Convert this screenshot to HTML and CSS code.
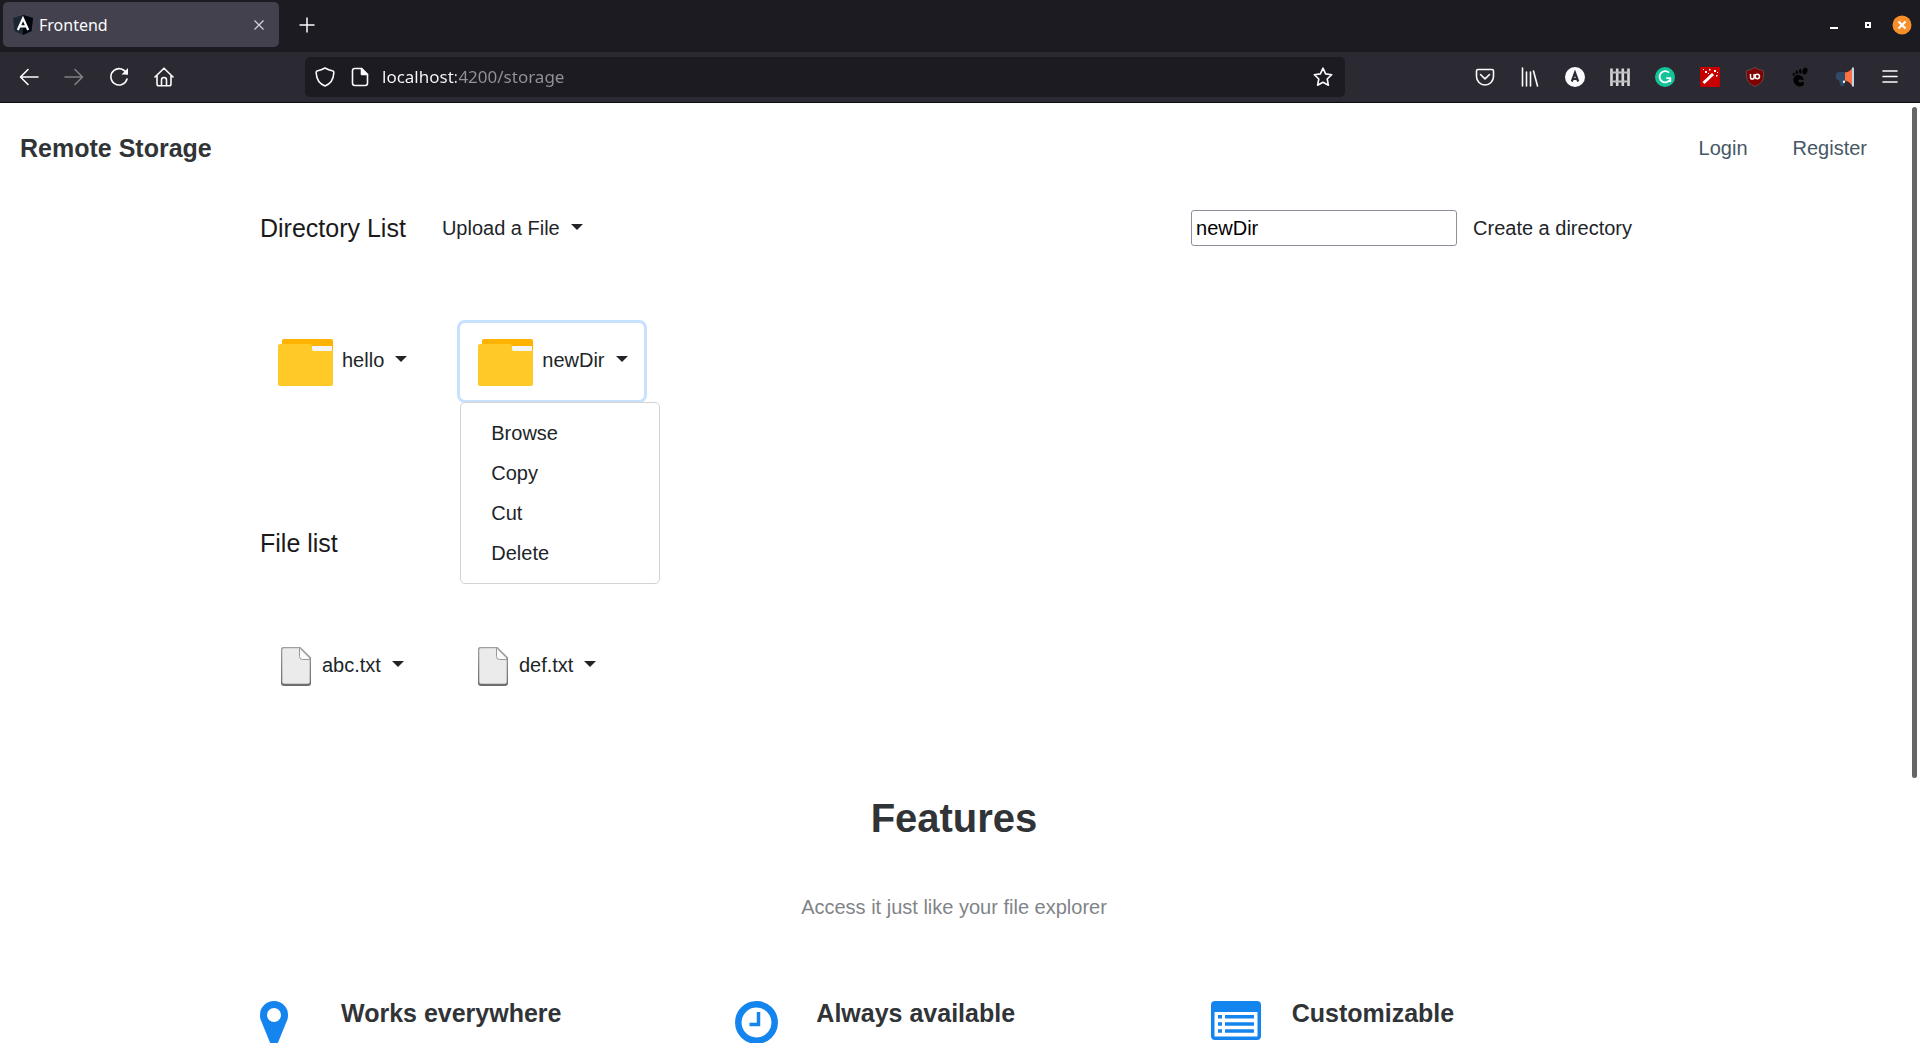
FILE: index.html
```html
<!DOCTYPE html>
<html lang="en">
<head>
<meta charset="utf-8">
<title>Frontend</title>
<link rel="stylesheet" href="styles.css">
</head>
<body>
<div class="browser">
  <header class="chrome">
    <div class="tabstrip">
      <div class="tab">
        <svg class="favicon" width="20" height="20" viewBox="0 0 20 20"><path d="M10 0 20 3 18.500 16 10 20 1.500 16 0 3Z" fill="#1d2733"/><path d="M10 0 20 3 18.500 16 10 20Z" fill="#02060f"/><path fill="none" stroke="#fff" stroke-width="2.200" d="M4.800 15 10 3.500 15.200 15M7 11.300h6"/></svg>
        <span class="tab-title">Frontend</span>
        <button class="tab-close" aria-label="Close tab"><svg width="10" height="10" viewBox="0 0 10 10"><path d="M.5.5l9 9M9.500.5l-9 9" stroke="#d5d5da" stroke-width="1.200"/></svg></button>
      </div>
      <button class="tool" aria-label="New tab"><svg width="16" height="16" viewBox="0 0 16 16"><path d="M8 .5v15M.5 8h15" stroke="#fbfbfe" stroke-width="1.500"/></svg></button>
      <div class="window-controls">
        <button class="win" aria-label="Minimize"><svg width="16" height="18" viewBox="0 0 16 18"><path d="M4 12h8" stroke="#fff" stroke-width="2"/></svg></button>
        <button class="win" aria-label="Maximize"><svg width="16" height="18" viewBox="0 0 16 18"><rect x="6" y="7" width="4" height="4" fill="none" stroke="#fff" stroke-width="2"/></svg></button>
        <button class="win" aria-label="Close"><svg width="20" height="20" viewBox="0 0 20 20"><circle cx="10" cy="10" r="9.500" fill="#f7902b"/><path d="M6.500 6.500l7 7M13.500 6.500l-7 7" stroke="#fff" stroke-width="2.200"/></svg></button>
      </div>
    </div>
    <div class="toolbar">
      <nav class="tools" aria-label="Navigation">
        <button class="tool" aria-label="Back"><svg width="20" height="20" viewBox="0 0 20 20" class="line"><path d="M19 10H2M9 2.500 1.500 10 9 17.500"/></svg></button>
        <button class="tool dim" aria-label="Forward"><svg width="20" height="20" viewBox="0 0 20 20" class="line"><path d="M1 10h17M11 2.500 18.500 10 11 17.500"/></svg></button>
        <button class="tool" aria-label="Reload"><svg width="20" height="20" viewBox="0 0 20 20" class="line"><path d="M17.800 7A8.200 8.200 0 1 0 18 12"/><path d="M19 1v6.500h-6.500z" fill="#fbfbfe" stroke="none"/></svg></button>
        <button class="tool" aria-label="Home"><svg width="20" height="20" viewBox="0 0 20 20" class="line"><path d="M1 10 10 1.200 19 10M3 8.500V17q0 1.800 1.800 1.800h10.400Q17 18.800 17 17V8.500M7.500 18.500V13a2.500 2.500 0 0 1 5 0v5.500"/></svg></button>
      </nav>
      <div class="urlbar">
        <button class="url-tool" aria-label="Protection"><svg width="20" height="20" viewBox="0 0 20 20" class="line"><path d="M10 1C7.500 2.500 4.500 3.500 2 4c-1 .3-.8 1-.8 2C1.500 12.500 5 17 10 19c5-2 8.500-6.500 8.800-13 0-1 .2-1.700-.8-2-2.500-.5-5.500-1.500-8-3z"/></svg></button>
        <button class="url-tool" aria-label="Site information"><svg width="20" height="20" viewBox="0 0 20 20" class="line"><path d="M11.500 1.500H4.700Q2.500 1.500 2.500 3.700v12.600q0 2.200 2.200 2.200h10.600q2.200 0 2.200-2.200V7.500z"/><path d="M11.500 1.500v6h6z" fill="#fbfbfe"/></svg></button>
        <input class="url-input" type="text" aria-label="Address" value="localhost:4200/storage">
        <button class="tool" aria-label="Bookmark"><svg width="20" height="20" viewBox="0 0 20 20" class="line"><path d="M10 1.200l2.600 5.700 6.100.8-4.500 4.300 1.200 6.200L10 15.200l-5.400 3 1.200-6.200L1.300 7.700l6.100-.8z"/></svg></button>
      </div>
      <div class="tools">
        <button class="tool" aria-label="Pocket"><svg width="20" height="20" viewBox="0 0 20 20" class="line"><path d="M3 2.500h14q1.500 0 1.500 1.500v5.500a8.500 8.500 0 0 1-17 0V4Q1.500 2.500 3 2.500zM5.500 7.500 10 11.800l4.500-4.300"/></svg></button>
        <button class="tool" aria-label="Library"><svg width="20" height="20" viewBox="0 0 20 20" class="line"><path d="M2.500 1v18M6.500 5v14M10.500 5v14M13.500 4l4 15"/></svg></button>
        <button class="tool" aria-label="Account"><svg width="20" height="20" viewBox="0 0 20 20"><circle cx="10" cy="10" r="10" fill="#fbfbfe"/><path d="M6.800 14.500 10 5.800l3.200 8.700M7.800 12h4.400" fill="none" stroke="#2b2a33" stroke-width="2.200"/></svg></button>
        <button class="tool" aria-label="Fence"><svg width="20" height="20" viewBox="0 0 20 20"><path d="M1.500 19V1.500M7.200 19V1.500M12.800 19V1.500M18.500 19V1.500" fill="none" stroke="#d6d6d6" stroke-width="2.600"/><path d="M0 5.500h20M0 14.500h20" stroke="#bdbdbd" stroke-width="2"/></svg></button>
        <button class="tool" aria-label="Grammar"><svg width="20" height="20" viewBox="0 0 20 20"><circle cx="10" cy="10" r="10" fill="#15c39a"/><path d="M14 5.700a5.600 5.600 0 1 0 .8 7.300M15.300 15v-3.800h-4" fill="none" stroke="#fff" stroke-width="1.800"/></svg></button>
        <button class="tool" aria-label="Wand"><svg width="20" height="20" viewBox="0 0 20 20"><path d="M0 0h20v20H0z" fill="#c60000"/><path d="M3.500 16 13 7" stroke="#fff" stroke-width="3"/><path d="M14 3h2v2h-2zM9 2h1.500v1.500H9zM5 4h2v2H5zM3 2h1v1H3zM16 8h1.500v1.500H16zM8 6h1v1H8zM17 5h1v1h-1z" fill="#fff"/></svg></button>
        <button class="tool" aria-label="Blocker"><svg width="20" height="20" viewBox="0 0 20 20"><path d="M10 .5Q14 3 18.500 3.500V9q0 7-8.500 10.500Q1.500 16 1.500 9V3.500Q6 3 10 .5z" fill="#800000" stroke="#6b4448"/><path d="M5.500 7v3.300a1.800 1.800 0 0 0 3.600 0V7" fill="none" stroke="#fff" stroke-width="1.500"/><circle cx="12.300" cy="9.500" r="2.200" fill="none" stroke="#fff" stroke-width="1.500"/></svg></button>
        <button class="tool" aria-label="Gnome"><svg width="20" height="20" viewBox="0 0 20 20"><path d="M13.500 12.500c0-2-2-4.500-5.500-4.500-3 0-5 2.500-4.500 5.500.5 3.500 3.500 6 6.500 6 3.500 0 5-3 3.500-4.500-1.200-1.200-2.500 1-4.200.3-1.300-.6-1.300-2-.3-2.500 1.500-.8 4.500 1.500 4.500-.3z" fill="#000"/><ellipse cx="15" cy="4" rx="2.400" ry="3.500" transform="rotate(18 15 4)"/><ellipse cx="10.300" cy="4.200" rx="1.300" ry="2.500"/><ellipse cx="6.800" cy="5.300" rx="1.200" ry="2"/><ellipse cx="3.800" cy="7.300" rx="1" ry="1.600"/></svg></button>
        <button class="tool" aria-label="Megaphone"><svg width="20" height="20" viewBox="0 0 20 20"><path d="M10 5H4.500A4.200 4.200 0 0 0 4 13.300L5.500 19H9l1-5z" fill="#2d4a66"/><path d="M10 5.500Q14.500 5 17 1.500v17Q14.500 14.500 10 13.500z" fill="#ff7043"/><path d="M18 .5v19" stroke="#cfe8fb" stroke-width="1.800"/><circle cx="9" cy="14.800" r="1.200" fill="#fff"/></svg></button>
        <button class="tool" aria-label="Menu"><svg width="20" height="20" viewBox="0 0 20 20" class="line"><path d="M3 4h14M3 9.500h14M3 15h14"/></svg></button>
      </div>
    </div>
  </header>

  <div class="viewport">
    <div class="page">
      <nav class="navbar">
        <a class="brand" href="#">Remote Storage</a>
        <div class="nav-links"><a class="nav-link" href="#">Login</a><a class="nav-link" href="#">Register</a></div>
      </nav>

      <main class="container">
        <section class="actions">
          <h5 class="section-title">Directory List</h5>
          <button class="btn">Upload a File <span class="caret"></span></button>
          <form class="create-form">
            <input class="dir-input" type="text" aria-label="Directory name" value="newDir">
            <button class="btn" type="button">Create a directory</button>
          </form>
        </section>

        <section class="entries folders">
          <div class="dropdown">
            <button class="btn entry">
              <svg class="entry-icon" width="60" height="60" viewBox="0 0 60 60"><use href="#folder-art"/></svg>
              hello <span class="caret"></span></button>
          </div>
          <div class="dropdown">
            <button class="btn entry focused" aria-expanded="true">
              <svg class="entry-icon" width="60" height="60" viewBox="0 0 60 60">
                <g id="folder-art"><path d="M8 7h47q2 0 2 2v12H6V9q0-2 2-2z" fill="#ffb300"/><path d="M32 14h24v12H32z" fill="#f5f5f5"/><path d="M4 12h30q2 0 2 2v3q0 2 2 2h19v33q0 2-2 2H4q-2 0-2-2V14q0-2 2-2z" fill="#ffca28"/></g>
              </svg>
              newDir <span class="caret"></span></button>
            <div class="menu">
              <a class="menu-item" href="#">Browse</a>
              <a class="menu-item" href="#">Copy</a>
              <a class="menu-item" href="#">Cut</a>
              <a class="menu-item" href="#">Delete</a>
            </div>
          </div>
        </section>

        <h5 class="section-title">File list</h5>

        <section class="entries files">
          <button class="btn entry">
            <svg class="entry-icon" width="40" height="40" viewBox="0 0 40 40">
              <defs><linearGradient id="edge" x2="0" y2="1"><stop offset="0" stop-color="#a0a0a0"/><stop offset="1" stop-color="#6c6c6c"/></linearGradient></defs>
              <g id="file-art"><path d="M7 0h17.500L35 10.500V36q0 3-3 3H8q-3 0-3-3V2q0-2 2-2z" fill="url(#edge)"/><path d="M8 1.300h15.800L33.700 11v24q0 1.700-1.700 1.700H8q-1.700 0-1.700-1.700V3q0-1.700 1.700-1.700z" fill="#ebebeb"/><path d="M23.500 1.300v8.200q0 3 3 3h7.200v-1.500L24 1.300z" fill="#fafafa" stroke="#999"/></g>
            </svg>
            abc.txt <span class="caret"></span></button>
          <button class="btn entry">
            <svg class="entry-icon" width="40" height="40" viewBox="0 0 40 40"><use href="#file-art"/></svg>
            def.txt <span class="caret"></span></button>
        </section>

        <section class="features">
          <h2 class="features-title">Features</h2>
          <p class="features-lead">Access it just like your file explorer</p>
          <div class="feature-grid">
            <div class="feature">
              <svg width="50" height="50" viewBox="0 0 50 50"><path fill="#1485ee" fill-rule="evenodd" d="M14 0a14 14 0 0 1 14 14c0 3-.5 4.500-1.200 6L17 44q-3 5-6 0L1.200 20C.5 18.500 0 17 0 14A14 14 0 0 1 14 0zm0 7a7 7 0 1 0 0 14 7 7 0 0 0 0-14z"/></svg>
              <h3 class="feature-title">Works everywhere</h3>
            </div>
            <div class="feature">
              <svg width="50" height="50" viewBox="0 0 50 50"><circle cx="21.500" cy="21.500" r="18.200" fill="none" stroke="#1485ee" stroke-width="6.500"/><path d="M23.500 11v12.500H14.500" fill="none" stroke="#1485ee" stroke-width="3.500"/></svg>
              <h3 class="feature-title">Always available</h3>
            </div>
            <div class="feature">
              <svg width="50" height="50" viewBox="0 0 50 50"><path fill="#1485ee" fill-rule="evenodd" d="M4 0h42q4 0 4 4v31q0 4-4 4H4q-4 0-4-4V4q0-4 4-4zM4 11q-.5 0-.5.5V35q0 .5.5.5h42q.5 0 .5-.5V11.500q0-.5-.5-.5z"/><path stroke="#1485ee" stroke-width="3.500" d="M7 15.700h4M14 15.700h29M7 22.900h4M14 22.900h29M7 30h4M14 30h29"/></svg>
              <h3 class="feature-title">Customizable</h3>
            </div>
          </div>
        </section>
      </main>
    </div>
    <div class="scrollbar"><div class="thumb"></div></div>
  </div>
</div>
</body>
</html>
```
FILE: styles.css
```css
* { box-sizing: border-box; }
body { margin: 0; font: 20px/30px "Liberation Sans", Arial, sans-serif; color: #212529; background: #fff; }
h2, h3, h5, p { margin: 0; }
a { color: inherit; text-decoration: none; }
button, input { font: inherit; color: inherit; margin: 0; }
button { border: 0; padding: 0; background: none; }
svg { flex: none; }

.browser { display: flex; flex-direction: column; height: 100vh; overflow: hidden; }

.chrome { flex: none; background: #2b2a33; border-bottom: 1px solid #0c0c0d; font-family: "Noto Sans", sans-serif; color: #fbfbfe; }
.tabstrip { display: flex; align-items: center; height: 52px; padding: 0 8px 3px 3px; background: #1c1b22; }
.tab { display: flex; align-items: center; width: 276px; height: 45px; padding: 0 10px; gap: 6px; margin-right: 5px; border-radius: 5px; background: #42414d; }
.tab-title { flex: 1; font-size: 16px; }
.tab-close { display: grid; place-items: center; width: 20px; height: 20px; }
.window-controls { display: flex; gap: 14px; margin-left: auto; }
.win { display: grid; place-items: center; width: 20px; height: 20px; }

.toolbar { display: flex; align-items: center; height: 50px; padding: 0 8px 0 6px; }
.tools { display: flex; }
.tool { display: grid; place-items: center; width: 45px; height: 45px; }
.dim { opacity: .4; }
.line { fill: none; stroke: #fbfbfe; stroke-width: 1.6; stroke-linecap: round; stroke-linejoin: round; }
.urlbar { flex: 1; display: flex; align-items: center; height: 40px; margin: 0 117px 0 119px; padding-left: 2px; border-radius: 5px; background: #1c1b22; }
.url-tool { display: grid; place-items: center; width: 35px; height: 40px; }
.url-input { flex: 1; min-width: 0; border: 0; outline: 0; padding: 0 0 0 5px; font-size: 17px; color: transparent; background: linear-gradient(90deg, #fbfbfe 79px, #93929c 79px); background-clip: text; -webkit-background-clip: text; }

.viewport { flex: 1; min-height: 0; display: flex; overflow: hidden; }
.page { flex: 1; min-width: 0; }
.scrollbar { flex: none; width: 12px; padding: 4px 3px 4px 4px; }
.thumb { height: 72%; border-radius: 3px; background: #666; }

.navbar { display: flex; align-items: center; justify-content: space-between; height: 90px; padding: 0 41px 0 20px; }
.brand { font-size: 25px; font-weight: 700; color: #313437; }
.nav-links { display: flex; gap: 45px; color: #465765; }

.container { max-width: 1426px; margin: 0 auto; padding: 0 19px; }
.section-title { font-size: 25px; font-weight: 400; color: #1a1a1a; }
.actions { display: flex; align-items: center; gap: 20px; height: 70px; }
.create-form { display: flex; align-items: center; margin-left: auto; }
.dir-input { width: 266px; height: 36px; padding: 0 4px; border: 1px solid #8f8f9d; border-radius: 3px; color: #000; background: #fff; }

.btn { display: flex; align-items: center; gap: 6px; padding: 8px 16px; border-radius: 5px; }
.caret { margin: 0 0 2px 5px; border: 6px solid transparent; border-top-color: #212529; border-bottom: 0; }
.entry { padding: 5px 16px 8px; }
.entry-icon { margin-top: 4px; }
.entries { display: flex; align-items: flex-start; gap: 37px; }
.folders { height: 265px; padding-top: 60px; }
.files { height: 235px; padding-top: 80px; }
.dropdown { position: relative; }
.focused { box-shadow: 0 0 0 3px #c8e1ff; }
.menu { position: absolute; top: 100%; left: 0; width: 200px; margin-top: 2px; padding: 10px 0; border: 1px solid #d3d3d3; border-radius: 5px; background: #fff; }
.menu-item { display: block; padding: 5px 30px; }

.features-title { text-align: center; font-size: 40px; line-height: 50px; color: #313437; }
.features-lead { margin: 49px 0 79px; text-align: center; color: #7f8488; }
.feature-grid { display: grid; grid-template-columns: repeat(3, 1fr); column-gap: 38px; }
.feature { display: flex; gap: 31px; }
.feature-title { font-size: 25px; line-height: 24px; color: #313437; }
```
